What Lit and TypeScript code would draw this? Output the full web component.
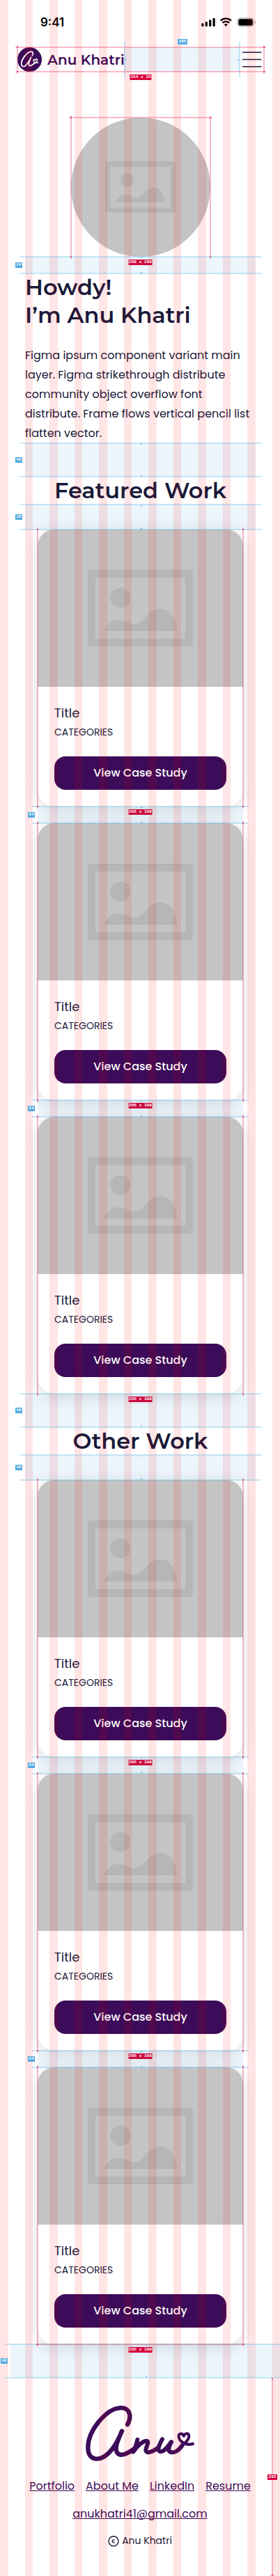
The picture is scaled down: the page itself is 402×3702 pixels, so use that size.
import { LitElement, html, svg, css, nothing } from "lit";
import { customElement, property } from "lit/decorators.js";
import { classMap } from "lit/directives/class-map.js";

const tag = css`
  .tag {
    position: absolute;
    height: 8px;
    padding: 0 1px;
    box-sizing: border-box;
    border-radius: 0.5px;
    font: 700 6.1px/8px "Liberation Mono", monospace;
    white-space: pre;
    color: #fff;
  }
`;

/* Redline spacing marker: a tinted band with edge rules and a size tag. */
@customElement("space-mark")
class SpaceMark extends LitElement {
  @property({ type: Number }) size = 24;
  static styles = [
    tag,
    css`
      :host { display: block; position: relative; z-index: 6; flex: none; }
      .band { position: relative; background: rgba(72, 164, 228, 0.1); }
      .s24 { height: 24px; }
      .s36 { height: 36px; }
      .s48 { height: 48px; }
      .rule {
        position: absolute;
        left: -8px;
        right: -8px;
        height: 2px;
        background: rgba(80, 176, 230, 0.3);
      }
      .top { top: -1px; }
      .bottom { bottom: -1px; }
      .dot { position: absolute; left: 50%; width: 2px; height: 1px; background: #4aaee0; }
      .dot.top { top: 1px; }
      .dot.bottom { bottom: 1px; }
      .tag { left: -14px; top: 50%; margin-top: -4px; background: #4faae2; width: 10px; text-align: center; }
    `,
  ];
  render() {
    return html`<div class="band ${"s" + this.size}">
      <div class="rule top"></div>
      <div class="rule bottom"></div>
      <div class="dot top"></div>
      <div class="dot bottom"></div>
      <div class="tag">${this.size}</div>
    </div>`;
  }
}

/* Redline outline around the element that hosts it. */
@customElement("frame-mark")
class FrameMark extends LitElement {
  @property() label = "";
  @property() edges = "tb";
  static styles = [
    tag,
    css`
      :host { position: absolute; inset: 0; z-index: 7; pointer-events: none; }
      .v, .h { position: absolute; background: rgba(232, 40, 90, 0.32); }
      .v { top: -3px; bottom: -3px; width: 2px; }
      .h { left: -3px; right: -3px; height: 2px; }
      .l { left: -1px; }
      .r { right: -1px; }
      .t { top: -1px; }
      .b { bottom: -1px; }
      .c { position: absolute; width: 2px; height: 2px; background: rgba(215, 20, 70, 0.55); }
      .tag { left: 50%; top: calc(100% + 4px); transform: translateX(-50%); background: #cc0a40; }
      .strong { background: #d9003c; }
    `,
  ];
  render() {
    const t = this.edges.includes("t");
    const b = this.edges.includes("b");
    return html`
      <div class="v l"></div>
      <div class="v r"></div>
      ${t ? html`<div class="h t"></div>` : nothing}
      ${b ? html`<div class="h b"></div>` : nothing}
      <div class="c l t"></div><div class="c r t"></div>
      <div class="c l b"></div><div class="c r b"></div>
      <div class=${classMap({ tag: true, strong: b })}>${this.label}</div>
    `;
  }
}

const placeholder = svg`
  <g fill="#b6b6b6">
    <path fill-rule="evenodd" d="M4 0H147a4 4 0 0 1 4 4V106a4 4 0 0 1-4 4H4a4 4 0 0 1-4-4V4a4 4 0 0 1 4-4ZM11 11.5V99H140V11.5Z"/>
    <circle cx="47" cy="40.3" r="14.5"/>
    <path d="M22.7 88C29 77 35 71.7 43 71.7C53 71.7 60 78 69 78C80 78 86 55.7 104.7 55.7C118 55.7 126 69 129 88Z"/>
  </g>`;

@customElement("work-card")
class WorkCard extends LitElement {
  @property({ type: Boolean }) last = false;
  static styles = css`
    :host { display: block; position: relative; width: 295px; height: 398px; flex: none; }
    .card {
      display: flex;
      flex-direction: column;
      height: 398px;
      border-radius: 24px;
      background: #fff;
      overflow: hidden;
      box-shadow: 0 4px 24px rgba(0, 0, 0, 0.14);
    }
    .image { display: flex; align-items: center; justify-content: center; height: 226px; background: #c4c4c4; }
    .image svg { width: 151px; height: 110px; }
    .body { display: flex; flex-direction: column; padding: 24px; }
    .title { font-size: 18px; line-height: 27px; }
    .cat { margin: 4px 0 24px; font-size: 14px; line-height: 21px; }
    .btn {
      height: 48px;
      padding: 0;
      border: 0;
      border-radius: 16px;
      background: #3c0b59;
      color: #fff;
      font: 500 16px/48px Poppins, Inter, sans-serif;
    }
  `;
  render() {
    return html`
      <div class="card">
        <div class="image"><svg viewBox="0 0 151 110">${placeholder}</svg></div>
        <div class="body">
          <div class="title">Title</div>
          <div class="cat">CATEGORIES</div>
          <button class="btn">View Case Study</button>
        </div>
      </div>
      <frame-mark label="295 x 398" edges=${this.last ? "b" : ""}></frame-mark>
    `;
  }
}

@customElement("app-root")
class AppRoot extends LitElement {
  static styles = [
    tag,
    css`
      :host {
        display: block;
        position: relative;
        width: 402px;
        height: 3702px;
        overflow: hidden;
        background: #fff;
        color: #171a3a;
        font-family: Poppins, Inter, sans-serif;
      }
      .columns {
        position: absolute;
        inset: 0;
        z-index: 5;
        pointer-events: none;
        display: grid;
        grid-template-columns: repeat(12, 1fr);
        column-gap: 24px;
      }
      .columns i { background: rgba(255, 0, 0, 0.1); }
      .status {
        display: flex;
        justify-content: space-between;
        align-items: center;
        height: 20px;
        padding: 22px 34px 26px 58px;
        color: #000;
      }
      .time { font: 600 17px/20px Inter, sans-serif; }
      .status svg { width: 80px; height: 16px; }
      nav {
        position: relative;
        display: flex;
        align-items: center;
        width: 354px;
        height: 35px;
        margin-left: 25px;
      }
      .badge { width: 35px; height: 35px; flex: none; }
      .name { width: 111px; margin-left: 8px; flex: none; font: 600 20px/24px Montserrat, Inter, sans-serif; color: #3c0b59; white-space: nowrap; }
      .space { position: relative; z-index: 6; width: 165px; height: 35px; flex: none; background: rgba(72, 164, 228, 0.1); }
      .vr { position: absolute; top: -8px; bottom: -8px; width: 2px; background: rgba(80, 176, 230, 0.3); }
      .v1 { left: -1px; }
      .v2 { right: -1px; }
      .pt { position: absolute; top: 17px; width: 1px; height: 2px; background: #4aaee0; }
      .p1 { left: 1px; }
      .p2 { right: 1px; }
      .space .tag { top: -12px; left: 76px; width: 14px; text-align: center; background: #4faae2; }
      .menu { width: 35px; height: 35px; }
      main { display: flex; flex-direction: column; margin: 66px 35px 0 36px; }
      .avatar { position: relative; align-self: center; width: 200px; height: 200px; }
      .disc { display: flex; align-items: center; justify-content: center; height: 200px; border-radius: 50%; background: #c4c4c4; }
      .disc svg { width: 101px; height: 73.6px; }
      h1, h2 { margin: 0; font: 600 32px/40px Montserrat, Inter, sans-serif; }
      h2 { text-align: center; }
      p { margin: 24px 0 0; font-size: 16px; line-height: 28px; white-space: nowrap; }
      .list { display: flex; flex-direction: column; align-self: center; width: 295px; }
      .foot-gap { margin-left: 15px; width: 388px; }
      footer {
        position: relative;
        display: flex;
        flex-direction: column;
        align-items: center;
        box-sizing: border-box;
        height: 285px;
        padding: 40px 0;
      }
      .sign { width: 156px; height: 80px; margin-bottom: 24px; }
      .links { display: flex; gap: 16px; }
      a { font-size: 16px; line-height: 24px; color: #3c0b59; text-decoration: underline 1px; text-underline-offset: 1px; text-decoration-skip-ink: none; }
      .mail { margin: 16px 0; }
      .copy { display: flex; align-items: center; gap: 4px; font-size: 14px; line-height: 21px; }
      .copy svg { width: 16px; height: 16px; }
      .measure { position: absolute; z-index: 7; top: 1px; bottom: 0; left: 390px; width: 2px; background: rgba(232, 40, 90, 0.32); }
      .end { position: absolute; left: 0; width: 2px; height: 1px; background: #d9003c; }
      .e1 { top: 0; }
      .e2 { bottom: 1px; }
      .foot { position: absolute; left: -3px; width: 8px; height: 1px; bottom: 0; background: rgba(232, 40, 90, 0.32); }
      .measure .tag { left: -6px; top: 138px; width: 14px; text-align: center; background: #d9003c; }
    `,
  ];

  private cards(last = false) {
    return html`<div class="list">
      <work-card></work-card>
      <space-mark size="24"></space-mark>
      <work-card></work-card>
      <space-mark size="24"></space-mark>
      <work-card ?last=${last}></work-card>
    </div>`;
  }

  render() {
    return html`
      <div class="status">
        <span class="time">9:41</span>
        <svg viewBox="0 0 80 16">
          <rect x="1.300" y="9.500" width="3.200" height="4.500" rx="0.900"/>
          <rect x="6.700" y="7.200" width="3.200" height="6.800" rx="0.900"/>
          <rect x="12.100" y="4.600" width="3.200" height="9.400" rx="0.900"/>
          <rect x="17.500" y="2" width="3.200" height="12" rx="0.900"/>
          <g fill="none" stroke="#000" stroke-width="2.300">
            <path d="M28.600 5.700a11.200 11.200 0 0 1 15.400 0"/>
            <path d="M31.400 8.800a7.100 7.100 0 0 1 9.800 0"/>
          </g>
          <path d="M36.300 13.900 33.700 11.300a3.800 3.800 0 0 1 5.200 0Z"/>
          <rect x="52.900" y="1.900" width="23.400" height="12.200" rx="3.800" fill="none" stroke="#000" stroke-opacity="0.350"/>
          <rect x="54.300" y="3.300" width="20.600" height="9.400" rx="2.600"/>
          <path d="M77.800 5.900v4.200a2.300 2.300 0 0 0 0-4.200Z" fill-opacity="0.400"/>
        </svg>
      </div>
      <nav>
        <svg class="badge" viewBox="0 0 105 105">
          <circle cx="52.500" cy="52.500" r="52.500" fill="#3c0b59"/>
          <g fill="none" stroke="#fff" stroke-linecap="round" stroke-linejoin="round">
            <path stroke-width="5.500" d="M64 35C71 24 66 17 56 19C38 23 17 54 17 71C17 82 25 86 33 80C44 72 53 55 59 43C53 56 46 69 50 77C55 84 66 74 73 69"/>
            <path stroke-width="4.500" d="M72 70C80 67 87 59 85 53C83 48 77 51 77 56C75 51 69 52 69 57C70 63 78 69 89 66"/>
          </g>
        </svg>
        <span class="name">Anu Khatri</span>
        <div class="space">
          <div class="vr v1"></div><div class="vr v2"></div>
          <div class="pt p1"></div><div class="pt p2"></div>
          <div class="tag">165</div>
        </div>
        <svg class="menu" viewBox="0 0 35 35">
          <path d="M4.500 7.200h26.500M4.500 17.500h26.500M4.500 27.700h26.500" stroke="#171a3a" stroke-width="1.400" stroke-linecap="round"/>
        </svg>
        <frame-mark label="354 x 35" edges="tb"></frame-mark>
      </nav>
      <main>
        <div class="avatar">
          <div class="disc"><svg viewBox="0 0 151 110">${placeholder}</svg></div>
          <frame-mark label="200 x 200" edges="t"></frame-mark>
        </div>
        <space-mark size="24"></space-mark>
        <h1>Howdy!<br />I’m Anu Khatri</h1>
        <p>
          Figma ipsum component variant main<br />
          layer. Figma strikethrough distribute<br />
          community object overflow font<br />
          distribute. Frame flows vertical pencil list<br />
          flatten vector.
        </p>
        <space-mark size="48"></space-mark>
        <h2>Featured Work</h2>
        <space-mark size="36"></space-mark>
        ${this.cards()}
        <space-mark size="48"></space-mark>
        <h2>Other Work</h2>
        <space-mark size="36"></space-mark>
        ${this.cards(true)}
      </main>
      <space-mark class="foot-gap" size="48"></space-mark>
      <footer>
        <svg class="sign" viewBox="24 21 468 240">
          <g fill="none" stroke="#3c0b59" stroke-linecap="round" stroke-linejoin="round">
            <path stroke-width="19" d="M204 103C224 68 214 30 175 31C112 33 34 130 34 202C34 236 50 251 72 251C122 251 160 182 180 131C166 164 149 197 157 219C167 247 205 229 233 207"/>
            <path stroke-width="18" d="M247 168C244 188 236 205 229 221C244 197 272 171 288 174C300 178 281 203 283 215C287 232 316 218 335 204"/>
            <path stroke-width="18" d="M354 166C344 184 329 213 344 219C362 224 380 193 393 178C384 196 375 214 388 221C404 228 424 216 440 193"/>
            <path stroke-width="12" d="M436 200C446 184 470 172 469 153C468 138 449 139 447 153C441 138 423 140 425 156C428 178 458 195 486 186"/>
          </g>
        </svg>
        <div class="links">
          <a>Portfolio</a><a>About Me</a><a>LinkedIn</a><a>Resume</a>
        </div>
        <a class="mail">anukhatri41@gmail.com</a>
        <div class="copy">
          <svg viewBox="0 0 16 16" fill="none" stroke="#171a3a" stroke-width="1.400">
            <circle cx="8" cy="8" r="7"/>
            <path d="M9.500 6.800a1.850 1.850 0 1 0 0 2.400"/>
          </svg>
          <span>Anu Khatri</span>
        </div>
        <div class="measure">
          <div class="end e1"></div><div class="end e2"></div><div class="foot"></div>
          <div class="tag">285</div>
        </div>
      </footer>
      <div class="columns">${Array.from({ length: 12 }, () => html`<i></i>`)}</div>
    `;
  }
}
